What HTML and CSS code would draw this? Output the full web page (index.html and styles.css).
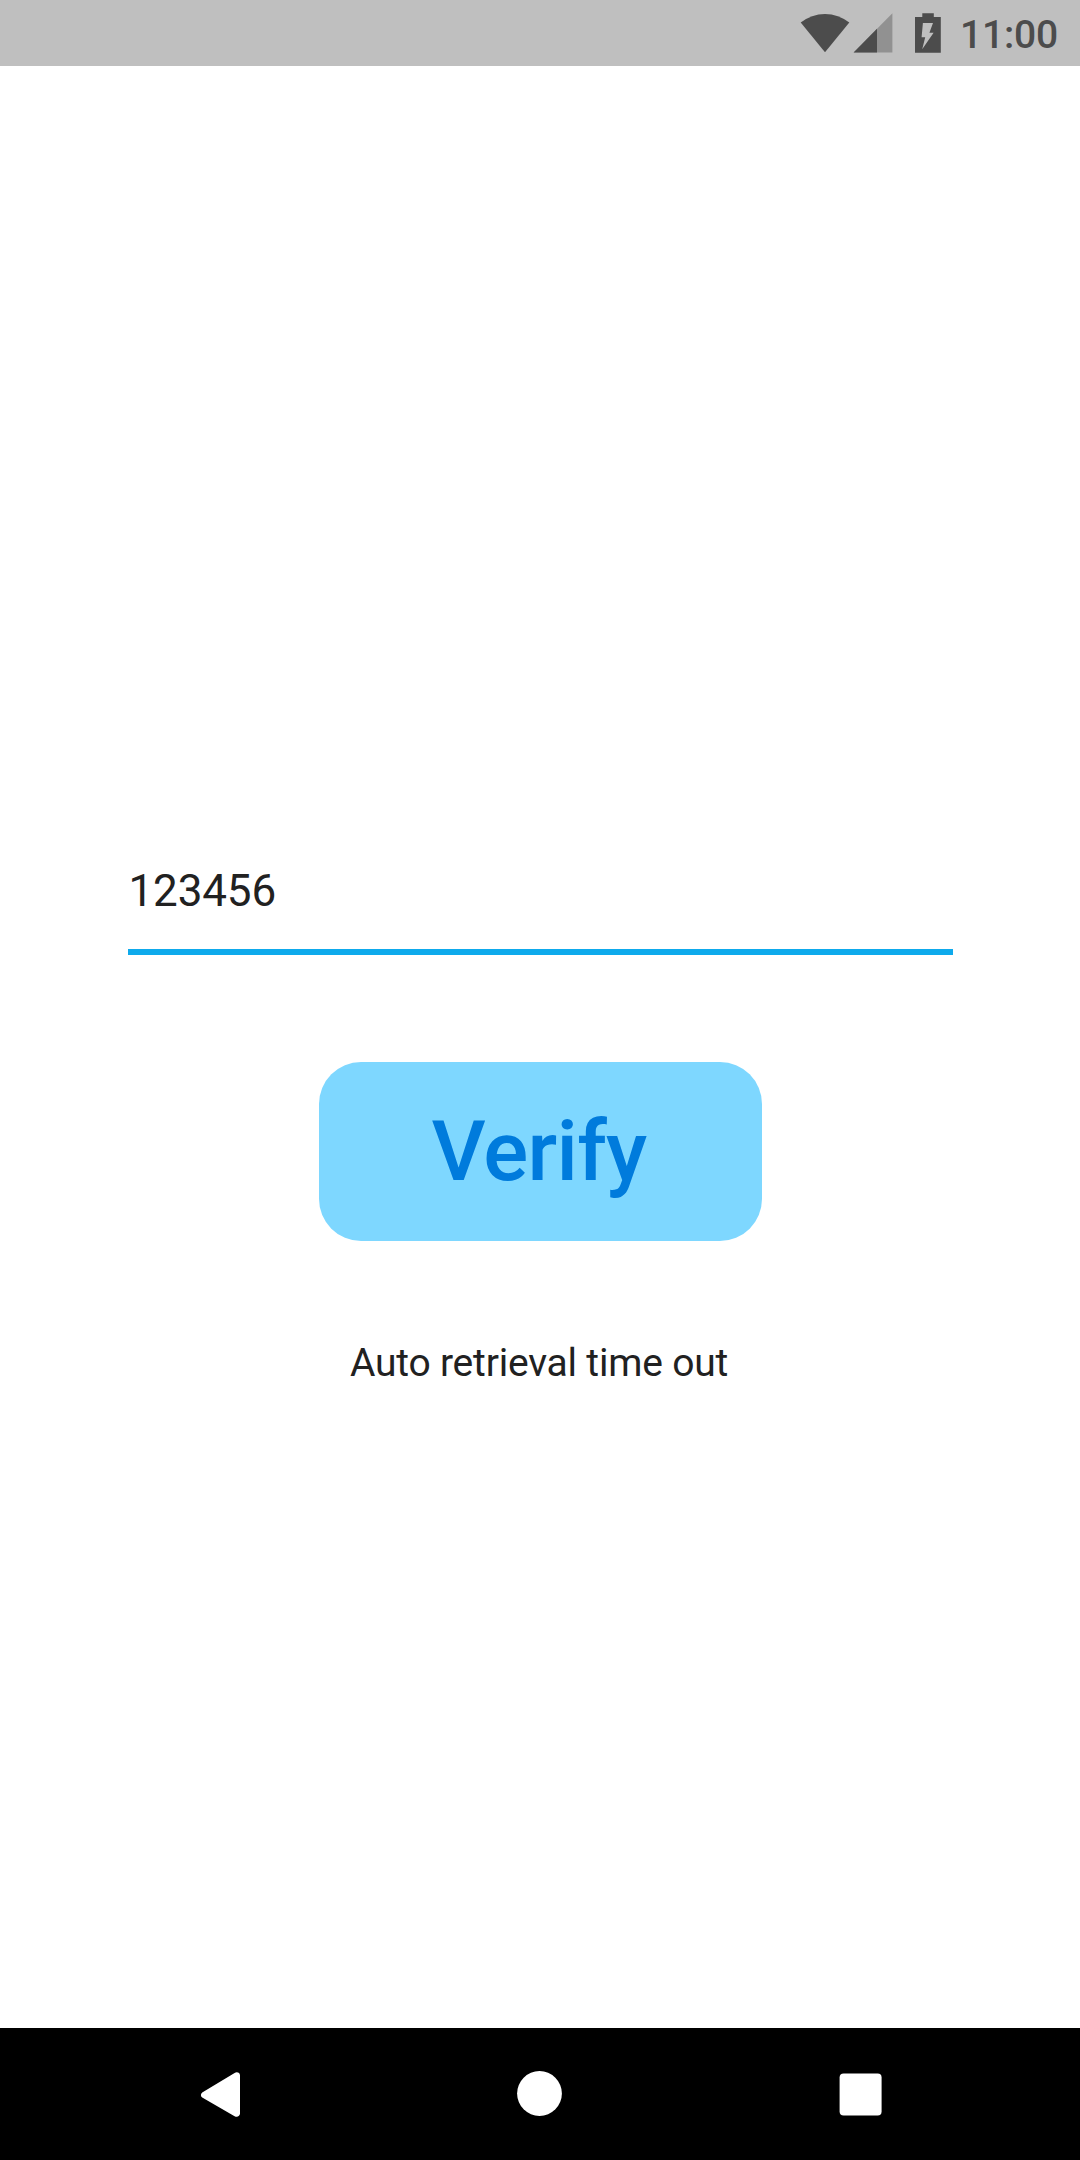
FILE: index.html
```html
<!DOCTYPE html>
<html lang="en">
<head>
<meta charset="utf-8">
<title>Verify</title>
<link rel="stylesheet" href="styles.css">
</head>
<body>
<div class="screen">
  <header class="status-bar">
    <svg class="status-icons" width="146" height="66" viewBox="800 0 146 66" fill="#4c4c4c">
      <path d="M825 52.3 800.7 22.6Q811.5 13.9 825 13.9T849.3 22.6Z"/>
      <path d="M892.4 13.3V52.5H853.6Z" fill="#919191"/>
      <path d="M877 28.8V52.5H853.6Z"/>
      <path fill-rule="evenodd" d="M922.3 13.2H933.8V17H940.8V52.7H915V17H922.3ZM922.9 23 921.6 37.3H925.2L922.2 49.2 933.6 32.7H929.4L933 23Z"/>
    </svg>
    <span class="clock">11:00</span>
  </header>
  <main class="content">
    <div class="code-field">123456</div>
    <button class="verify">Verify</button>
    <p class="message">Auto retrieval time out</p>
  </main>
  <nav class="nav-bar">
    <svg width="1080" height="132" viewBox="0 0 1080 132" fill="#fff">
      <path d="M202.2 64.4 234.6 44.9C237 43.5 240 44.6 240 47.4V85.6C240 88.4 237 89.6 234.6 88.2L202.2 69.4C200.5 68.3 200.5 65.6 202.2 64.4Z"/>
      <circle cx="539.5" cy="65.5" r="22.4"/>
      <rect x="839.6" y="45.6" width="42" height="42" rx="4"/>
    </svg>
  </nav>
</div>
</body>
</html>
```
FILE: styles.css
```css
body {
  margin: 0;
  font-family: Roboto, sans-serif;
}

.screen {
  display: flex;
  flex-direction: column;
  width: 1080px;
  height: 2160px;
  background: #fff;
  overflow: hidden;
}

.status-bar {
  display: flex;
  align-items: center;
  justify-content: space-between;
  box-sizing: border-box;
  height: 66px;
  padding: 0 22px 0 800px;
  background: #bfbfbf;
}

.status-icons {
  flex: none;
}

.clock {
  padding-top: 3px;
  color: #4c4c4c;
  font-size: 39px;
  font-weight: 500;
  line-height: 46px;
  letter-spacing: -0.2px;
}

.content {
  display: flex;
  flex: 1;
  flex-direction: column;
  align-items: center;
  padding-top: 784px;
}

.code-field {
  box-sizing: border-box;
  width: 825px;
  height: 105px;
  padding: 15px 0 0 1px;
  border-bottom: 6px solid #0eaaec;
  color: #212121;
  font-size: 44px;
  line-height: 52px;
  letter-spacing: -0.15px;
}

.verify {
  width: 443px;
  height: 179px;
  margin: 107px 0 0;
  padding: 0 2px 0 0;
  border: 0;
  border-radius: 42px;
  background: #7ed7ff;
  color: #007bdc;
  font: 500 84px/98px Roboto, sans-serif;
  letter-spacing: -0.7px;
}

.message {
  margin: 99px 0 0;
  padding-right: 2px;
  color: #212121;
  font-size: 39px;
  line-height: 46px;
  letter-spacing: -0.2px;
}

.nav-bar {
  height: 132px;
  background: #000;
}
```
